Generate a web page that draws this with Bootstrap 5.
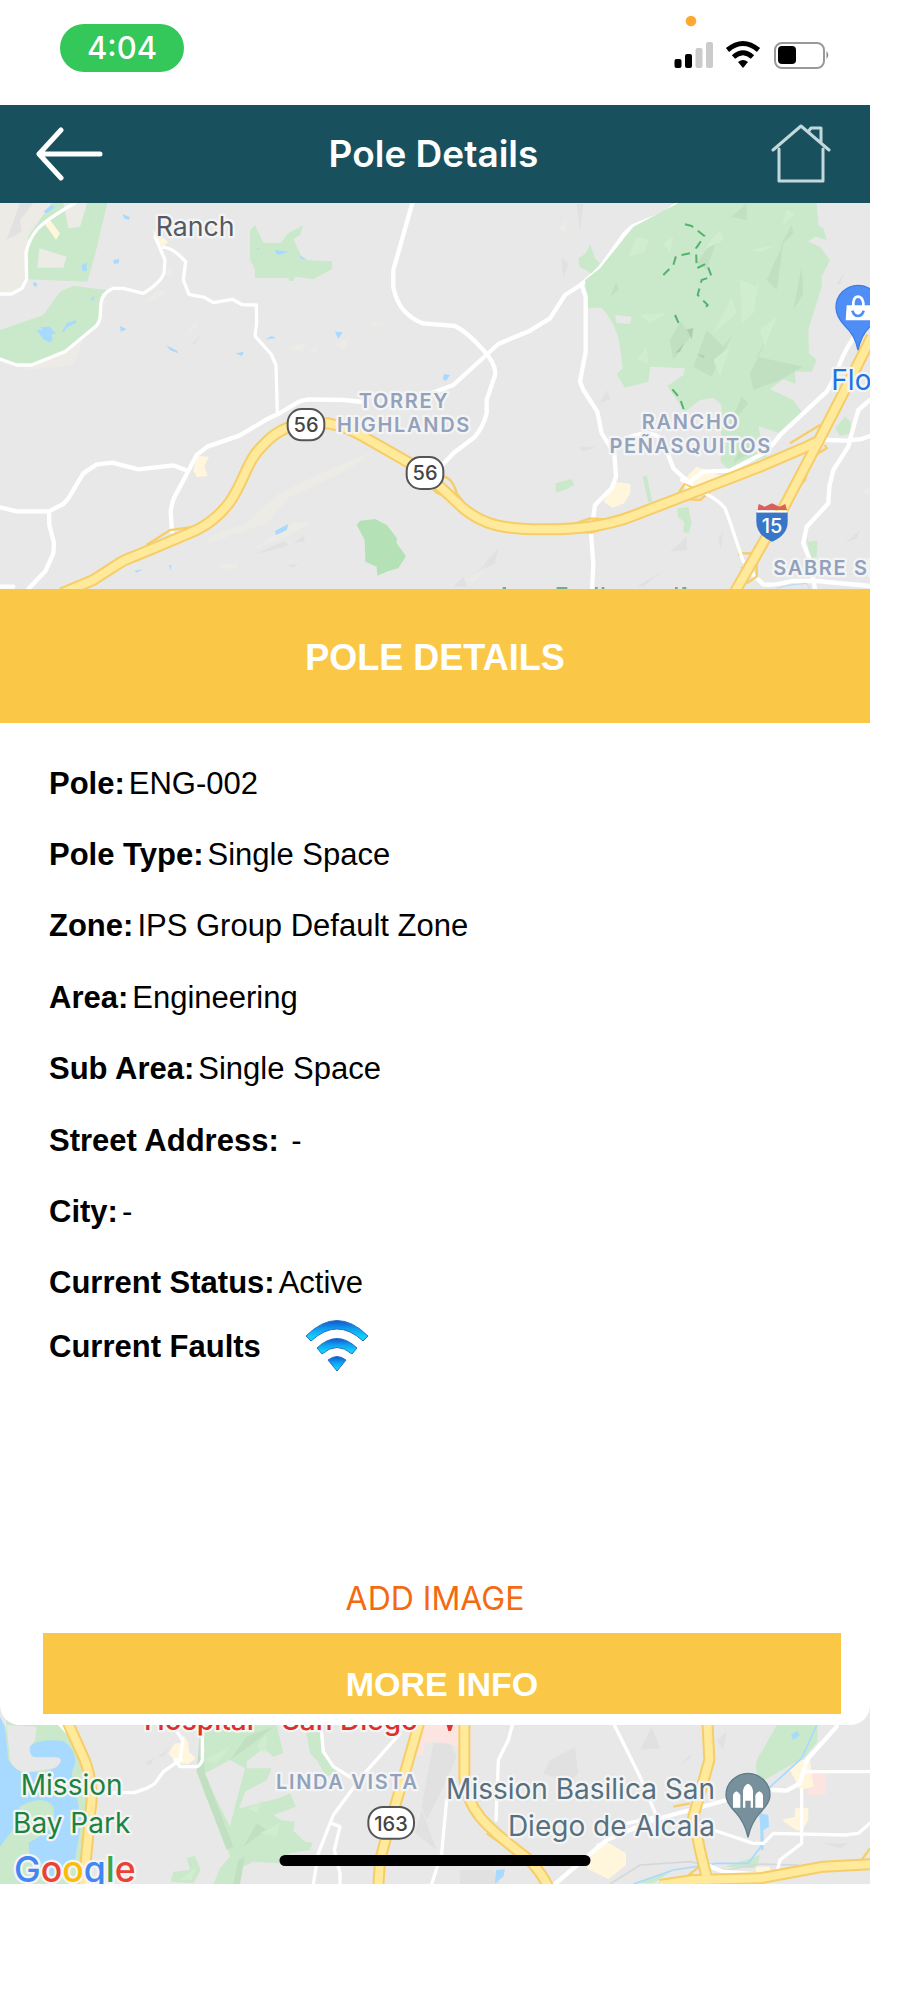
<!DOCTYPE html>
<html lang="en">
<head>
<meta charset="utf-8">
<meta name="viewport" content="width=device-width, initial-scale=1">
<title>Pole Details</title>
<link href="https://cdn.jsdelivr.net/npm/bootstrap@5.3.0/dist/css/bootstrap.min.css" rel="stylesheet">
<style>
  :root { --teal: #18515d; --amber: #fac846; --orange: #f46a10; }
  body { background: #fff; color: #000; font-family: "Liberation Sans", Arial, sans-serif; font-size: 31px; }
  .screen { margin-right: 54px; }
  .ui-font { font-family: Inter, "Liberation Sans", sans-serif; }
  .status-bar { height: 105px; padding: 10px 38px 0 60px; }
  .clock-pill { width: 124px; height: 48px; margin-top: 14px; background: #34c759; color: #fff; font-size: 31px; line-height: 48px; font-weight: 500; }
  .top-bar { height: 98px; padding: 0 39px 0 36px; background: var(--teal); color: #fff; }
  .top-bar h1 { font-size: 37px; line-height: 44px; font-weight: 600; }
  .top-bar button, .top-bar svg { display: block; }
  .map { display: block; width: 100%; }
  .map-top { height: 386px; }
  .map-bottom { height: 179px; }
  .map-wrap { margin-top: -20px; }
  .sheet { border-radius: 0 0 20px 20px; z-index: 1; }
  .banner { height: 134px; padding-top: 4px; background: var(--amber); color: #fff; font-size: 36px; line-height: 44px; font-weight: 700; }
  .details { min-height: 571px; margin: 25px 49px 0; }
  .details dt, .details dd { margin: 0; line-height: 36px; }
  .details dt { font-weight: 700; }
  .details > div { gap: 4px; }
  .faults { margin: 0 49px; height: 56px; gap: 44px; font-weight: 700; }
  .add-image { margin-top: 202px; color: var(--orange); font-size: 32px; line-height: 44px; font-weight: 400; }
  .actions { padding: 12px 29px 11px 43px; }
  .more-info { height: 81px; background: var(--amber); color: #fff; font-size: 34px; line-height: 40px; font-weight: 700; padding-top: 22px; }
  .home-indicator { width: 311px; height: 11px; bottom: 18px; background: #000; }
  .road { fill: none; stroke: #fff; stroke-width: 13; stroke-linejoin: round; stroke-linecap: round; }
  .thin { stroke-width: 10; }
  .hw-edge { fill: none; stroke: #f6cd66; stroke-width: 36; stroke-linejoin: round; }
  .hw-core { fill: none; stroke: #ffe99b; stroke-width: 24; stroke-linejoin: round; }
  .ramp { fill: none; stroke: #f6cd66; stroke-width: 7; }
  .park { fill: #c9e9ca; } .park-dark { fill: #b5e1b7; } .relief { fill: #c1e0c2; } .relief-light { fill: #d1edd0; }
  .water { fill: #a8daff; } .town { fill: #fff6dc; } .hill { fill: #e1e1e1; } .sand { fill: #ecebe6; }
  .trail { fill: none; stroke: #52b36c; stroke-width: 6; stroke-dasharray: 26 18; }
  .map text { font-family: Inter, "Liberation Sans", sans-serif; paint-order: stroke; stroke: #f4f4f4; stroke-width: 14; stroke-linejoin: round; }
  .map .district { fill: #93a2bc; font-size: 60px; font-weight: 600; letter-spacing: 5px; text-anchor: middle; }
  .map .place { font-size: 84px; }
  .map .town-name { font-size: 80px; }
  .map .shield { fill: #444; font-size: 60px; font-weight: 500; stroke: none; text-anchor: middle; }
  .map .brand { font-size: 107px; font-weight: 500; }
</style>
</head>
<body>
<div class="screen">
  <header>
    <div class="status-bar d-flex justify-content-between align-items-start">
      <div class="clock-pill ui-font rounded-pill text-center">4:04</div>
      <svg width="158" height="62" viewBox="0 0 158 62" role="img" aria-label="Signal, Wi-Fi and battery">
        <circle cx="17" cy="11" r="5.3" fill="#ffa935"/>
        <rect x=".5" y="49" width="7" height="9" rx="2"/><rect x="11" y="44" width="7" height="14" rx="2"/>
        <rect x="21.500" y="38" width="7" height="20" rx="2" fill="#cbcbcb"/><rect x="32" y="32" width="7" height="26" rx="2" fill="#cbcbcb"/>
        <g fill="none" stroke="#000" stroke-width="5"><path d="M53.500 40Q69 27 84.500 40"/><path d="M59.500 47Q69 38.500 78.500 47"/></g>
        <path d="M64 52Q69 48 74 52L69 58Z"/>
        <rect x="101" y="33" width="49" height="25" rx="7" fill="none" stroke="#999" stroke-width="2"/>
        <rect x="104" y="36" width="18" height="18" rx="4"/><path d="M152.500 41Q156 45 152.500 49Z" fill="#888"/>
      </svg>
    </div>
    <nav class="top-bar d-flex align-items-center justify-content-between" aria-label="Page">
      <button type="button" class="border-0 bg-transparent p-0" aria-label="Back">
        <svg width="68" height="54" viewBox="0 0 68 54" fill="none" stroke="#fff" stroke-width="5" stroke-linecap="round" stroke-linejoin="round"><path d="M25 3 3 27 25 51M3 27H64"/></svg>
      </button>
      <h1 class="ui-font m-0">Pole Details</h1>
      <button type="button" class="border-0 bg-transparent p-0" aria-label="Home">
        <svg width="68" height="60" viewBox="0 0 68 60" fill="none" stroke="#c3d8dc" stroke-width="3" stroke-linecap="round" stroke-linejoin="round"><path d="M10 26 38 2 66 26M16 25V57H60V25M45 8 48 4H58V19"/></svg>
      </button>
    </nav>
  </header>

  <main>
    <svg class="map map-top" viewBox="0 9 2610 1158" preserveAspectRatio="xMidYMid slice" role="img" aria-label="Map of Torrey Highlands and Rancho Peñasquitos">
      <rect width="2610" height="1200" fill="#e8e8e8"/>
      <g>
        <path class="sand" d="M0 0H170L90 90 76 245 40 280H0ZM505 200 518 202 512 230 500 225ZM435 305 480 270 497 280 460 300ZM60 512 200 450 250 420 220 495 130 505ZM552 410 595 355 590 380ZM855 443 915 430 910 455ZM930 455 955 430 950 458ZM1008 435 1048 408 1035 450ZM1105 380 1120 365 1172 370ZM610 1035 640 1005 740 970 830 885 940 830 1115 755 1060 800 940 860 870 890 800 970ZM753 1050 885 965 930 970 860 1010ZM655 1095 712 1090 710 1105 655 1107Z"/>
        <path class="hill" d="M20 120 60 9H100L60 60 65 95ZM570 435 605 402 585 432ZM770 1060 850 1025 870 1035 800 1055ZM858 1095 895 1092 880 1103ZM880 1030 915 1003 912 1025Z"/>
        <path class="park" d="M155 9H322L285 165 262 245 84 238 85 110ZM0 390 130 345 180 275 220 257 320 270 300 320 298 370 190 455 95 495 50 492 0 475ZM750 90 765 75 790 128H842L865 100 910 75 900 105 880 118 895 150 910 180 996 184V208L940 237 885 230 880 243H868L865 234H765V208L750 180Z"/>
        <path class="sand" d="M190 9H262L240 80 205 85ZM118 145 200 170 190 203H112Z"/><path class="town" d="M130 65 150 60 180 100 168 120ZM590 767 627 770 613 798 623 828 590 831 580 810ZM458 90 505 125 490 140 468 130Z"/>
        <path class="park-dark" d="M1070 975 1080 962 1125 957 1160 975 1190 1013V1030L1218 1068 1195 1105 1165 1113 1132 1127 1130 1100 1096 1085 1094 1020Z"/>
        <path class="water" d="M130 35 155 15 165 22 140 40ZM368 42 390 52 386 60 372 55ZM245 195 260 188V213L248 214ZM340 180 358 177 356 190 342 192ZM98 250 105 246 113 254 105 262ZM270 298 284 288 278 302ZM110 390H130L140 400 120 382 150 380 168 402H155L158 420 150 428 130 418ZM186 395 200 370 228 360V368L200 383 192 396ZM360 378 380 388 362 395ZM499 436 532 453 533 460 510 450ZM707 460 732 455 725 468ZM797 418 815 408 828 415ZM1005 395 1028 397 1015 416ZM825 150 868 155 840 164 828 161ZM897 165 922 180 905 178ZM825 993 865 972 860 990 828 1006ZM404 1112 428 1108 410 1118ZM507 1095H513V1112ZM770 143 780 146 772 149Z"/>
        <path class="road thin" d="M0 282H35L66 265 80 238 78 160Q85 120 110 90T225 9M465 110 495 180 492 220Q480 250 430 280L370 265H340Q305 280 303 310L300 355Q295 375 280 385L195 455 95 495H50L0 477M490 142Q515 140 557 185L550 240 567 283 613 292 640 308 697 298 727 314 769 315 770 368 765 408 813 462 828 495 832 640"/>
        <path class="road" d="M0 922 50 934H147L190 912 205 895 250 820 290 793 337 788 415 808 520 796 562 812M147 934 148 975 162 1030 160 1060 137 1112 85 1167M0 1160H40M516 995 512 935Q515 900 535 870L560 822 590 765 622 740 718 707 800 658 835 642 897 605Q910 600 925 598L1030 600 1090 606M1237 9 1180 210V262Q1190 310 1215 335T1270 370L1365 378Q1400 395 1450 450T1480 540L1460 600V640Q1450 680 1425 710L1360 760 1330 792M1280 585 1360 555 1495 432 1590 392 1650 355 1695 285 1742 255 1800 205 1875 100 1900 78 1995 40 2035 9"/>
      </g>
      <g transform="translate(1320)">
        <path class="park" d="M715 9H1130L1135 75 1150 85 1160 120 1125 110 1105 125 1140 140 1170 180 1145 230V260L1120 340 1105 390 1107 460 1130 480 1115 515H1065L1067 552 1030 538 990 568 1060 600 1088 640 1020 700 955 678 965 725 980 770 868 810 842 785 845 615 820 593 780 600 735 635 682 558 730 525 735 505 630 500 625 545 555 563 530 522 548 505 540 440Q530 370 485 323H443L435 240 480 205 580 80ZM415 175 438 160 450 133 465 175 480 190 455 220 418 200ZM347 850 395 837 402 855 375 870 347 878ZM608 830 620 825 637 905 625 907ZM712 925 745 922 755 970 745 1000 730 995 732 965 713 950ZM1185 685 1215 650 1232 665V700L1200 708ZM1098 1000 1105 1025 1133 1022 1130 1070 1110 1075Z"/>
        <path class="relief" d="M840 90 770 190 800 210ZM920 10 875 50 920 60ZM1055 75 1060 100 1020 140ZM1030 130 980 240 1010 270ZM720 365 755 405 700 480 690 420ZM800 390 850 440 880 400 815 530 760 500ZM530 245 510 290 535 270ZM1085 200 1060 330 1090 280ZM1000 380 950 470 1090 500 1020 540 940 570 930 520ZM905 590 925 610 860 690ZM910 720 960 740 880 790Z"/>
        <path class="relief-light" d="M590 110 625 120 615 155 565 170ZM790 150 840 90 850 120ZM930 150 1010 135 965 155ZM900 240 950 260 960 220 940 340 905 370ZM875 290 890 340 820 400ZM600 345 680 340 630 370ZM820 480 870 440 840 530ZM960 390 1010 350 975 440ZM590 480 620 440 625 490ZM670 130 700 110 690 160ZM1040 30 1065 40 1025 80Z"/>
        <path d="M525 345 575 350 570 372 530 368Z" fill="#e8e8e8"/><path d="M705 460 732 430 720 455ZM740 388 760 385 755 418ZM770 462 795 467 790 474Z" fill="#a9cfab"/>
        <path class="hill" d="M410 12H430L420 95ZM365 175 385 190 370 235ZM480 610 500 570 510 598ZM415 740H468L430 755ZM690 1055 740 1010V1050ZM835 1015 850 990 842 1050ZM110 1120 175 1045 165 1090ZM590 1160 665 1115 610 1160ZM1190 250 1212 220 1200 255ZM40 1160 70 1130 80 1160ZM1215 1030 1260 990 1250 1015Z"/>
        <path class="sand" d="M357 90 380 55 378 95ZM85 1145 145 1090 100 1150ZM1265 875 1290 860V885ZM620 985 660 965 630 975Z"/>
        <path class="water" d="M8 538 12 522 30 525 18 543Z"/>
        <path class="town" d="M490 905 525 845 572 852 570 880 552 910 518 924ZM725 845 770 800 850 830 740 870Z"/>
        <path class="trail" d="M735 73 755 78 793 108 768 145 770 205 800 190 815 230 785 240 773 285 803 315 790 330M750 160 708 168 700 195 670 225M705 345 717 372M697 568 720 595 733 635"/>
        <path class="road" d="M425 255 437 290V455L420 545 430 570 472 635 485 700 523 760 528 830 515 865 465 915 453 1000 460 1090 456 1167"/>
        <path class="road" d="M1240 415Q1205 465 1190 520L1160 575 1025 700 980 755 870 812 790 815 750 845M560 715Q620 690 655 710L685 765 700 805 750 850M1290 600 1255 630 1235 700 1225 740 1180 810 1168 860 1165 910 1100 980 1090 1030 1110 1080 1125 1167M1160 720 1220 722 1265 717 1290 708M935 1120 970 1153Q1000 1158 1055 1143H1130L1290 1158"/>
        <path d="M1010 1165 1050 1155 1100 1150 1110 1167" fill="none" stroke="#b7dcf5" stroke-width="3"/>
        <path class="ramp" d="M0 830Q35 825 50 880L80 920M-20 870Q0 890 30 885M390 975 450 955 520 960M395 995 455 998 510 980M715 880 735 850 760 865M710 895 780 900 810 875M1050 730 1140 675M1155 735 1160 745 1100 780M1105 800 1095 840 1030 910M895 1065 905 1060 940 1060M950 1070V1130L920 1150M905 1100 920 1130"/>
        <path class="road thin" d="M725 840 755 853M795 880Q835 900 855 925L870 965 910 1085"/>
      </g>
      <path class="ramp" d="M440 1035 510 990 585 980M440 1045 520 1033"/>
      <path class="hw-edge" d="M185 1180 280 1140 345 1098Q370 1080 400 1070L520 1020 590 990Q650 960 690 905C735 840 740 780 790 735Q840 680 900 675L985 670Q1040 680 1090 710L1230 790 1320 860 1390 925C1450 975 1510 988 1630 988Q1790 990 1900 947L2100 870 2280 800 2420 740 2462 720M2615 410 2550 540 2460 715 2355 915 2205 1175"/>
      <path class="hw-core" d="M185 1180 280 1140 345 1098Q370 1080 400 1070L520 1020 590 990Q650 960 690 905C735 840 740 780 790 735Q840 680 900 675L985 670Q1040 680 1090 710L1230 790 1320 860 1390 925C1450 975 1510 988 1630 988Q1790 990 1900 947L2100 870 2280 800 2420 740 2462 720M2615 410 2550 540 2460 715 2355 915 2205 1175"/>
      <g fill="#fff" stroke="#555" stroke-width="6"><rect x="863" y="627" width="110" height="94" rx="42"/><rect x="1220" y="771" width="110" height="96" rx="42"/></g>
      <text class="shield" x="918" y="696">56</text><text class="shield" x="1275" y="841">56</text>
      <text class="town-name" x="467" y="109" fill="#535a65">Ranch</text>
      <text class="district" x="1212" y="624">TORREY</text><text class="district" x="1212" y="696">HIGHLANDS</text>
      <text class="district" x="2072" y="687">RANCHO</text><text class="district" x="2072" y="759">PEÑASQUITOS</text>
      <text class="district" x="2320" y="1125" style="text-anchor:start">SABRE SP</text>
      <path d="M2574 450Q2565 405 2535 378 2508 350 2508 322A66 66 0 0 1 2640 322Q2640 350 2612 378 2583 405 2574 450Z" fill="#4f8ef6" stroke="#3c7de8" stroke-width="4"/>
      <path d="M2540 316H2620V361H2537Z" fill="#fff"/><path d="M2560 318V308Q2562 290 2574 290T2590 308V318" fill="none" stroke="#fff" stroke-width="8"/><path d="M2557 332Q2562 348 2574 348T2591 332" fill="none" stroke="#4f8ef6" stroke-width="8"/>
      <text class="place" x="2494" y="570" fill="#1a73e8">Flo</text>
      <path d="M2269 937H2363V965Q2363 1005 2316 1025 2269 1005 2269 965Z" fill="#3a76c8"/><path d="M2273 930 2276 912 2294 920 2316 910 2338 920 2356 912 2361 930Z" fill="#d9605c"/><path d="M2270 935H2362" stroke="#fff" stroke-width="5"/>
      <text class="shield" x="2316" y="998" style="fill:#fff">15</text>
      <path d="M1508 1164h10M1670 1164h32M1785 1164h8M1805 1164h8M2025 1164h8M2047 1164h12" stroke="#6fae8b" stroke-width="6"/>
    </svg>

    <section class="sheet bg-white position-relative">
      <h2 class="banner d-flex align-items-center justify-content-center m-0">POLE DETAILS</h2>
      <dl class="details d-flex flex-column mb-0">
        <div class="d-flex flex-fill align-items-center"><dt>Pole:</dt><dd>ENG-002</dd></div>
        <div class="d-flex flex-fill align-items-center"><dt>Pole Type:</dt><dd>Single Space</dd></div>
        <div class="d-flex flex-fill align-items-center"><dt>Zone:</dt><dd>IPS Group Default Zone</dd></div>
        <div class="d-flex flex-fill align-items-center"><dt>Area:</dt><dd>Engineering</dd></div>
        <div class="d-flex flex-fill align-items-center"><dt>Sub Area:</dt><dd>Single Space</dd></div>
        <div class="d-flex flex-fill align-items-center"><dt>Street Address:</dt><dd>&nbsp;-</dd></div>
        <div class="d-flex flex-fill align-items-center"><dt>City:</dt><dd>-</dd></div>
        <div class="d-flex flex-fill align-items-center"><dt>Current Status:</dt><dd>Active</dd></div>
      </dl>
      <div class="faults d-flex align-items-center">
        <span>Current Faults</span>
        <svg width="64" height="56" viewBox="0 0 64 56" role="img" aria-label="Connection fault">
          <defs><linearGradient id="wave" x1="0" y1="0" x2="0" y2="1"><stop offset="0" stop-color="#1554c8"/><stop offset=".4" stop-color="#0f9cf0"/><stop offset=".8" stop-color="#10d0fa"/></linearGradient></defs>
          <g fill="url(#wave)" stroke="#2a6fc4" stroke-width="1"><path d="M1 17Q32-14 63 17L58 22Q32-2 6 22Z"/><path d="M12 29Q32 10 52 29L47 35Q32 22 17 35Z"/><path d="M23 41Q32 34 41 41L32 52Z"/></g>
        </svg>
      </div>
      <button type="button" class="add-image ui-font d-block mx-auto mb-0 border-0 bg-transparent p-0">ADD IMAGE</button>
      <div class="actions text-center">
        <button type="button" class="more-info d-block w-100 border-0">MORE INFO</button>
      </div>
    </section>

    <div class="map-wrap position-relative">
      <svg class="map map-bottom" viewBox="0 435 2610 537" preserveAspectRatio="xMidYMid slice" role="img" aria-label="Map of Mission Bay Park and Linda Vista">
        <rect y="400" width="2610" height="600" fill="#e8e8e8"/>
        <path class="park" d="M20 480H215L275 640 240 972H0V850L50 760 0 700ZM595 500 830 495 850 580 820 590 790 565 740 605V625H815L800 660 735 695 718 745 835 715 870 700 888 740 820 765 842 780 885 785 880 812 915 845 937 848 930 870 870 880 835 910 760 905 720 925V972H640L660 925 690 890 680 860 610 690 590 630 615 570ZM915 495 965 500V580L1015 630 980 650 950 600 930 580ZM512 965 520 935 570 930 560 895 585 887 602 930 580 970Z"/>
        <path d="M20 495 110 500 105 540 90 560 95 590H180L185 620 95 635Q50 645 30 600Z" fill="#e8e8e8"/>
        <path d="M615 640 690 600 735 625 710 720 690 800 650 720Z" fill="#e8e8e8"/>
        <path class="relief" d="M600 520 615 640 700 860 680 870 590 635ZM690 600 740 530 820 500 760 550ZM730 660 810 620 760 645ZM730 860 770 790 800 810ZM700 972 715 900 735 890 720 972Z"/>
        <path class="relief-light" d="M615 600 690 560 650 610ZM745 745 790 720 770 760ZM780 820 840 790 830 830ZM770 560 800 520 795 580ZM540 960 590 920 575 960Z"/>
        <path class="water" d="M0 470 15 500 25 600Q50 645 95 635 160 640 180 610 190 590 160 592H110Q85 590 90 560 110 535 190 543 230 570 225 610L215 640 245 780 225 900 170 972H130L90 920 85 850 165 800 160 740Q130 700 60 740L45 810 0 860Z"/>
        <path class="park" d="M0 860 45 800 100 790 85 850 95 930 150 972H0Z"/>
        <path class="town" d="M545 550 550 525 565 550 567 575 587 595 565 612 530 610 505 580 525 550Z"/>
        <path d="M1265 495H1380V560L1310 545 1275 550 1268 585 1250 588Z" fill="#fce4e1"/>
        <path class="hill" d="M435 605 462 595 450 618ZM475 590 510 560 490 590ZM1265 740 1300 550 1350 550 1370 590 1330 680 1310 720 1280 780ZM1245 820 1265 750 1310 870Z"/>
        <path class="road thin" d="M520 500 548 540 540 600 490 635 465 670 440 685 402 698H300M545 600 525 600 540 620H590Q600 618 607 600V500M1200 520 1085 650 1000 765 955 880 940 972M963 500 970 575 1000 620 1065 660M1340 720 1325 880 1295 972M995 790 1020 800 1003 870 1020 940V972"/>
        <g transform="translate(1320)">
          <path class="hill" d="M600 570 635 500 660 565ZM720 615 755 580 750 595ZM310 640 330 600 405 560 415 640 385 670ZM60 972V930H160L180 972ZM940 600 1000 500 960 570ZM830 540 860 515 850 570ZM1150 850 1225 850 1200 865Z"/>
          <path d="M0 495H60V560L0 545Z" fill="#fce4e1"/><path d="M1115 637H1157V705H1100Z" fill="#fce4e1"/>
          <path class="park" d="M1010 495H1132V545L1095 590 965 665Q930 620 965 575ZM855 920 960 885 950 925ZM590 970 700 930 640 970Z"/>
          <path class="town" d="M470 850 500 845 558 880V915L505 957 440 925ZM1050 630 1085 600 1110 600 1120 680 1080 690ZM1025 780 1065 770V745H1105V780L1085 815 1065 808ZM945 920H990V940H950Z"/>
          <path class="water" d="M1053 525 1070 513 1080 525 1060 540ZM960 760 985 765 987 800 970 810V870H962ZM168 930 195 928 190 950 165 970Z"/>
          <path d="M1130 495 1085 595 980 690 960 770 970 850 925 910 830 910 700 930 580 972" fill="none" stroke="#a8daff" stroke-width="5"/>
          <path d="M510 972 600 915 750 905 860 930 960 912 1070 915 1150 930" fill="none" stroke="#d5d7da" stroke-width="5"/>
          <path class="road thin" d="M217 495 205 540 175 600 168 780M523 495 600 650 650 770 540 795M820 810 940 850H970L1000 820 1215 825 1255 820 1290 790M1085 690V850L1020 900 1010 940M1290 635H1100"/>
          <path class="road" d="M1190 500 1100 600 1080 670 1040 692 1000 690M860 720 640 780 500 840 345 972M800 915 850 935 970 945"/>
          <path class="ramp" d="M140 820 190 855 250 890M740 950 790 910M700 740 750 730M1290 865 1265 900"/>
          <path class="hw-edge" d="M73 440V650C80 750 140 800 230 870Q290 910 325 980M800 440 808 600 780 700 760 770 780 870 805 972M660 975 760 960 960 955 1150 920 1300 912"/>
          <path class="hw-core" d="M73 440V650C80 750 140 800 230 870Q290 910 325 980M800 440 808 600 780 700 760 770 780 870 805 972M660 975 760 960 960 955 1150 920 1300 912"/>
        </g>
        <path class="road" d="M160 470 225 540 285 680 285 770 240 972"/>
        <path class="hw-edge" d="M200 480 245 580Q275 640 275 720L250 980M1260 480 1220 620 1170 790 1140 900 1135 980"/>
        <path class="hw-core" d="M200 480 245 580Q275 640 275 720L250 980M1260 480 1220 620 1170 790 1140 900 1135 980"/>
        <path d="M1340 495H1359L1353 513H1345Z" fill="#e0342f"/>
        <text class="place" x="432" y="510" fill="#dc2f2b" style="font-weight:500">Hospital - San Diego</text>
        <text class="place" x="215" y="706" fill="#1c833f" text-anchor="middle">Mission</text>
        <text class="place" x="215" y="818" fill="#1c833f" text-anchor="middle">Bay Park</text>
        <text class="district" x="1042" y="687">LINDA VISTA</text>
        <rect x="1105" y="741" width="137" height="95" rx="44" fill="#fff" stroke="#555" stroke-width="6"/>
        <text class="shield" x="1173" y="812">163</text>
        <text class="place" x="2145" y="717" fill="#56707f" text-anchor="end">Mission Basilica San</text>
        <text class="place" x="2145" y="828" fill="#56707f" text-anchor="end">Diego de Alcala</text>
        <path d="M2244 832Q2235 788 2205 755 2178 728 2178 706A66 66 0 0 1 2310 706Q2310 728 2283 755 2253 788 2244 832Z" fill="#78909c" stroke="#607d8b" stroke-width="4"/>
        <path d="M2199 743V706Q2200 698 2209 694 2219 698 2221 706V743ZM2229 743V692Q2232 676 2244 671 2256 676 2259 692V743H2252V722H2236V743ZM2266 743V706Q2268 698 2278 694 2288 698 2289 706V743Z" fill="#fff"/>
        <text class="brand" x="42" y="965"><tspan fill="#4285f4">G</tspan><tspan fill="#ea4335">o</tspan><tspan fill="#fbbc05">o</tspan><tspan fill="#4285f4">g</tspan><tspan fill="#34a853">l</tspan><tspan fill="#ea4335">e</tspan></text>
      </svg>
      <div class="home-indicator rounded-pill position-absolute start-50 translate-middle-x"></div>
    </div>
  </main>
</div>
<script src="https://cdn.jsdelivr.net/npm/bootstrap@5.3.0/dist/js/bootstrap.bundle.min.js"></script>
</body>
</html>
